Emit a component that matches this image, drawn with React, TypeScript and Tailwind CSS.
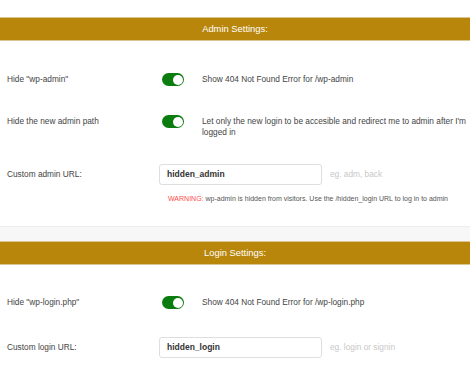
import React from 'react';

const Toggle: React.FC = () => (
  <span className="flex h-[13px] w-[22px] shrink-0 items-center justify-end rounded-full bg-[#0b7d0f] p-[1.5px]">
    <span className="h-[10px] w-[10px] rounded-full bg-white" />
  </span>
);

const Header: React.FC<{ title: string }> = ({ title }) => (
  <div className="flex h-[24px] items-center justify-center border-y border-[#dcc590] bg-[#b8860b] text-[9.4px] text-white">
    {title}
  </div>
);

const UrlInput: React.FC<{ value: string }> = ({ value }) => (
  <div className="flex h-[21px] w-[163px] shrink-0 items-center rounded-[3px] border border-[#dedede] bg-white pl-[7px] text-[8.5px] font-semibold text-[#333]">
    {value}
  </div>
);

const App: React.FC = () => {
  return (
    <div className="h-[380px] w-[470px] overflow-hidden bg-white text-[8.3px] text-[#444]" style={{ fontFamily: '"Liberation Sans", Arial, sans-serif' }}>
      <div className="h-[17px]" />
      <Header title="Admin Settings:" />

      <div className="pb-[22px]">
        <div className="mt-[32px] flex items-center pl-[7px]">
          <div className="w-[155px] shrink-0">Hide "wp-admin"</div>
          <Toggle />
          <div className="ml-[18px]">Show 404 Not Found Error for /wp-admin</div>
        </div>

        <div className="mt-[29px] flex items-start pl-[7px]">
          <div className="mt-[1px] w-[155px] shrink-0 leading-[11px]">Hide the new admin path</div>
          <Toggle />
          <div className="ml-[18px] mt-[1px] w-[266px] leading-[11px]">
            Let only the new login to be accesible and redirect me to admin after I'm logged in
          </div>
        </div>

        <div className="mt-[26px] flex items-center pl-[7px]">
          <div className="w-[152px] shrink-0">Custom admin URL:</div>
          <UrlInput value="hidden_admin" />
          <div className="ml-[8px] text-[#c8c8c8]">eg. adm, back</div>
        </div>

        <div className="mt-[9px] pl-[168px] text-[7px] leading-[10px] text-[#555]">
          <span className="text-[#ff4a4a]">WARNING:</span> wp-admin is hidden from visitors. Use the /hidden_login URL to log in to admin
        </div>
      </div>

      <div className="h-[15px] border-t border-[#ededed] bg-[#f7f7f7]" />
      <Header title="Login Settings:" />

      <div className="mt-[31px] flex items-center pl-[7px]">
        <div className="w-[155px] shrink-0">Hide "wp-login.php"</div>
        <Toggle />
        <div className="ml-[18px]">Show 404 Not Found Error for /wp-login.php</div>
      </div>

      <div className="mt-[28px] flex items-center pl-[7px]">
        <div className="w-[152px] shrink-0">Custom login URL:</div>
        <UrlInput value="hidden_login" />
        <div className="ml-[8px] text-[#c8c8c8]">eg. login or signin</div>
      </div>
    </div>
  );
};

export default App;
